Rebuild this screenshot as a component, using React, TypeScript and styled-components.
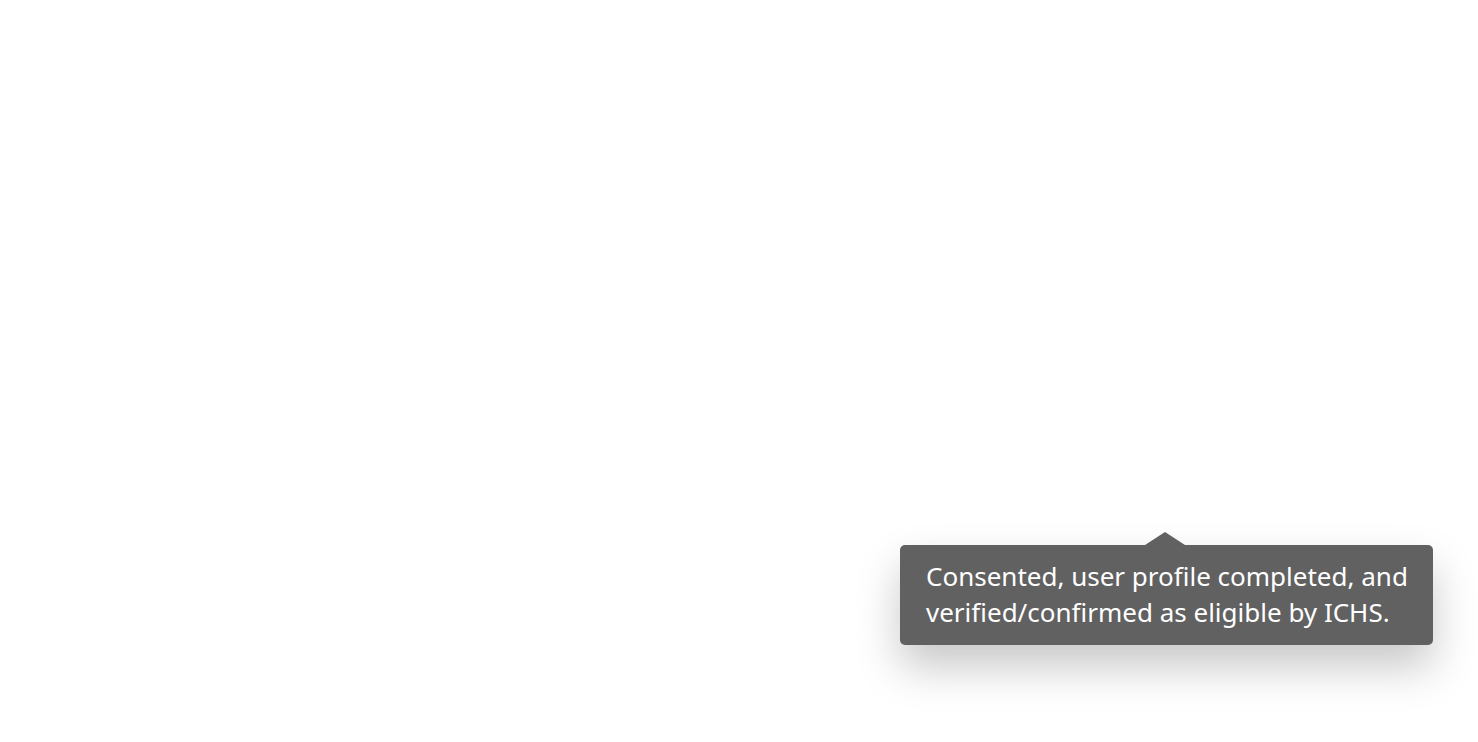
import React from 'react';
import styled, { createGlobalStyle } from 'styled-components';

const GlobalStyle = createGlobalStyle`
  html, body {
    margin: 0;
    padding: 0;
    background: #ffffff;
    font-family: "Noto Sans", "Open Sans", sans-serif;
  }
`;

const Page = styled.div`
  position: relative;
  width: 100vw;
  height: 100vh;
  overflow: hidden;
  background: #ffffff;
`;

const Tooltip = styled.div`
  position: absolute;
  left: 900px;
  top: 545px;
  box-sizing: border-box;
  width: 533px;
  padding: 13px 22px 15px 26px;
  background: #616161;
  color: #ffffff;
  border-radius: 5px;
  font-size: 26px;
  line-height: 36px;
  box-shadow: 0 22px 44px rgba(0, 0, 0, 0.22);

  &::before {
    content: '';
    position: absolute;
    top: -13px;
    left: 245px;
    width: 0;
    height: 0;
    border-left: 20px solid transparent;
    border-right: 20px solid transparent;
    border-bottom: 13px solid #616161;
  }
`;

const App: React.FC = () => (
  <>
    <GlobalStyle />
    <Page>
      <Tooltip role="tooltip">
        Consented, user profile completed, and verified/confirmed as eligible by ICHS.
      </Tooltip>
    </Page>
  </>
);

export default App;
